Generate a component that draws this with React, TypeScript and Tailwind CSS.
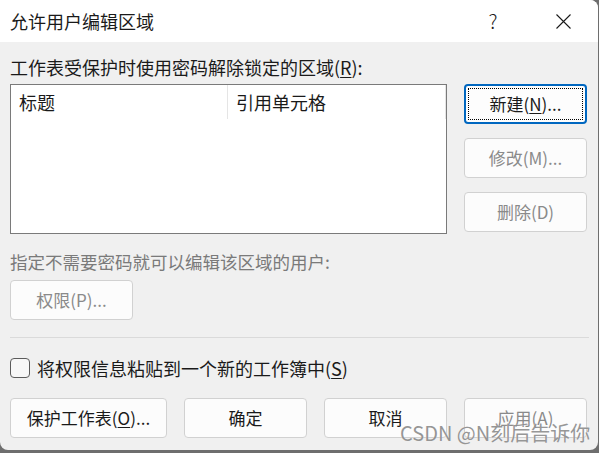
import React from "react";

function DlgButton({
  children,
  disabled,
  focused,
  className = "",
}: {
  children: React.ReactNode;
  disabled?: boolean;
  focused?: boolean;
  className?: string;
}) {
  if (focused) {
    return (
      <div
        className={`h-[40px] rounded-[4px] border-2 border-[#0067c0] bg-[#fdfdfd] p-[2px] ${className}`}
      >
        <div className="flex h-full w-full items-center justify-center border border-dotted border-black text-[17px] text-[#1a1a1a]">
          {children}
        </div>
      </div>
    );
  }
  return (
    <div
      className={`flex h-[40px] items-center justify-center rounded-[4px] border border-[#d1d1d1] bg-[#fcfcfc] text-[17px] ${
        disabled ? "text-[#8a8a8a]" : "text-[#1a1a1a]"
      } ${className}`}
    >
      {children}
    </div>
  );
}

export default function App() {
  return (
    <div className="h-[453px] w-[599px] overflow-hidden bg-[#6e6e6e] font-['Noto_Sans_CJK_SC',sans-serif]">
      <div className="relative h-[450px] w-[598px] overflow-hidden rounded-tr-[8px] rounded-b-[8px] bg-[#f0f0f0]">
        {/* title bar */}
        <div className="flex h-[42px] items-center bg-white">
          <div className="pl-[10px] text-[18px] leading-[20px] text-[#1a1a1a]">允许用户编辑区域</div>
          <div className="flex-1" />
          <div className="flex w-[46px] items-center justify-center text-[20px] font-light leading-[20px] text-[#1a1a1a]">?</div>
          <div className="w-[24px]" />
          <div className="flex w-[46px] items-center justify-center">
            <svg width="15" height="15" viewBox="0 0 15 15" fill="none" stroke="#1a1a1a" strokeWidth="1.1">
              <path d="M0.5 0.5 L14.5 14.5 M14.5 0.5 L0.5 14.5" />
            </svg>
          </div>
          <div className="w-[12px]" />
        </div>

        {/* body */}
        <div className="px-[10px] pt-[15px]">
          <div className="h-[20px] text-[18px] leading-[20px] text-[#1a1a1a]">
            工作表受保护时使用密码解除锁定的区域(<span className="underline underline-offset-2">R</span>):
          </div>

          <div className="mt-[7px] flex gap-[17px]">
            <div className="h-[150px] w-[437px] border border-[#7a7a7a] bg-white">
              <div className="flex h-[34px]">
                <div className="flex w-[217px] items-center border-r border-[#e5e5e5] pl-[8px] text-[18px] text-[#1a1a1a]">
                  标题
                </div>
                <div className="flex flex-1 items-center border-r border-[#e5e5e5] pl-[8px] text-[18px] text-[#1a1a1a]">
                  引用单元格
                </div>
              </div>
            </div>
            <div className="flex w-[123px] flex-col gap-[14px]">
              <DlgButton focused>
                新建(<span className="underline underline-offset-2">N</span>)...
              </DlgButton>
              <DlgButton disabled>修改(M)...</DlgButton>
              <DlgButton disabled>删除(D)</DlgButton>
            </div>
          </div>

          <div className="mt-[18px] h-[20px] text-[17.5px] leading-[20px] text-[#7a7a7a]">
            指定不需要密码就可以编辑该区域的用户:
          </div>
          <DlgButton disabled className="mt-[8px] w-[123px]">
            权限(P)...
          </DlgButton>

          <div className="mt-[17px] h-px w-[579px] bg-[#dadada]" />

          <div className="mt-[20px] flex h-[20px] items-center gap-[7px]">
            <div className="h-[20px] w-[20px] rounded-[4px] border border-[#5c5c5c] bg-[#f7f7f7]" />
            <div className="text-[18px] leading-[20px] text-[#1a1a1a]">
              将权限信息粘贴到一个新的工作簿中(<span className="underline underline-offset-2">S</span>)
            </div>
          </div>

          <div className="mt-[20px] flex gap-[17px]">
            <DlgButton className="w-[157px]">
              保护工作表(<span className="underline underline-offset-2">O</span>)...
            </DlgButton>
            <DlgButton className="w-[123px]">确定</DlgButton>
            <DlgButton className="w-[123px]">取消</DlgButton>
            <DlgButton disabled className="w-[123px]">
              应用(A)
            </DlgButton>
          </div>
        </div>

        {/* watermark */}
        <div className="absolute left-[400px] top-[421px] text-[20px] leading-[24px] text-[#8c8c8c] opacity-90 [text-shadow:0_0_1px_#ffffff]">
          CSDN @N刻后告诉你
        </div>
      </div>
    </div>
  );
}
